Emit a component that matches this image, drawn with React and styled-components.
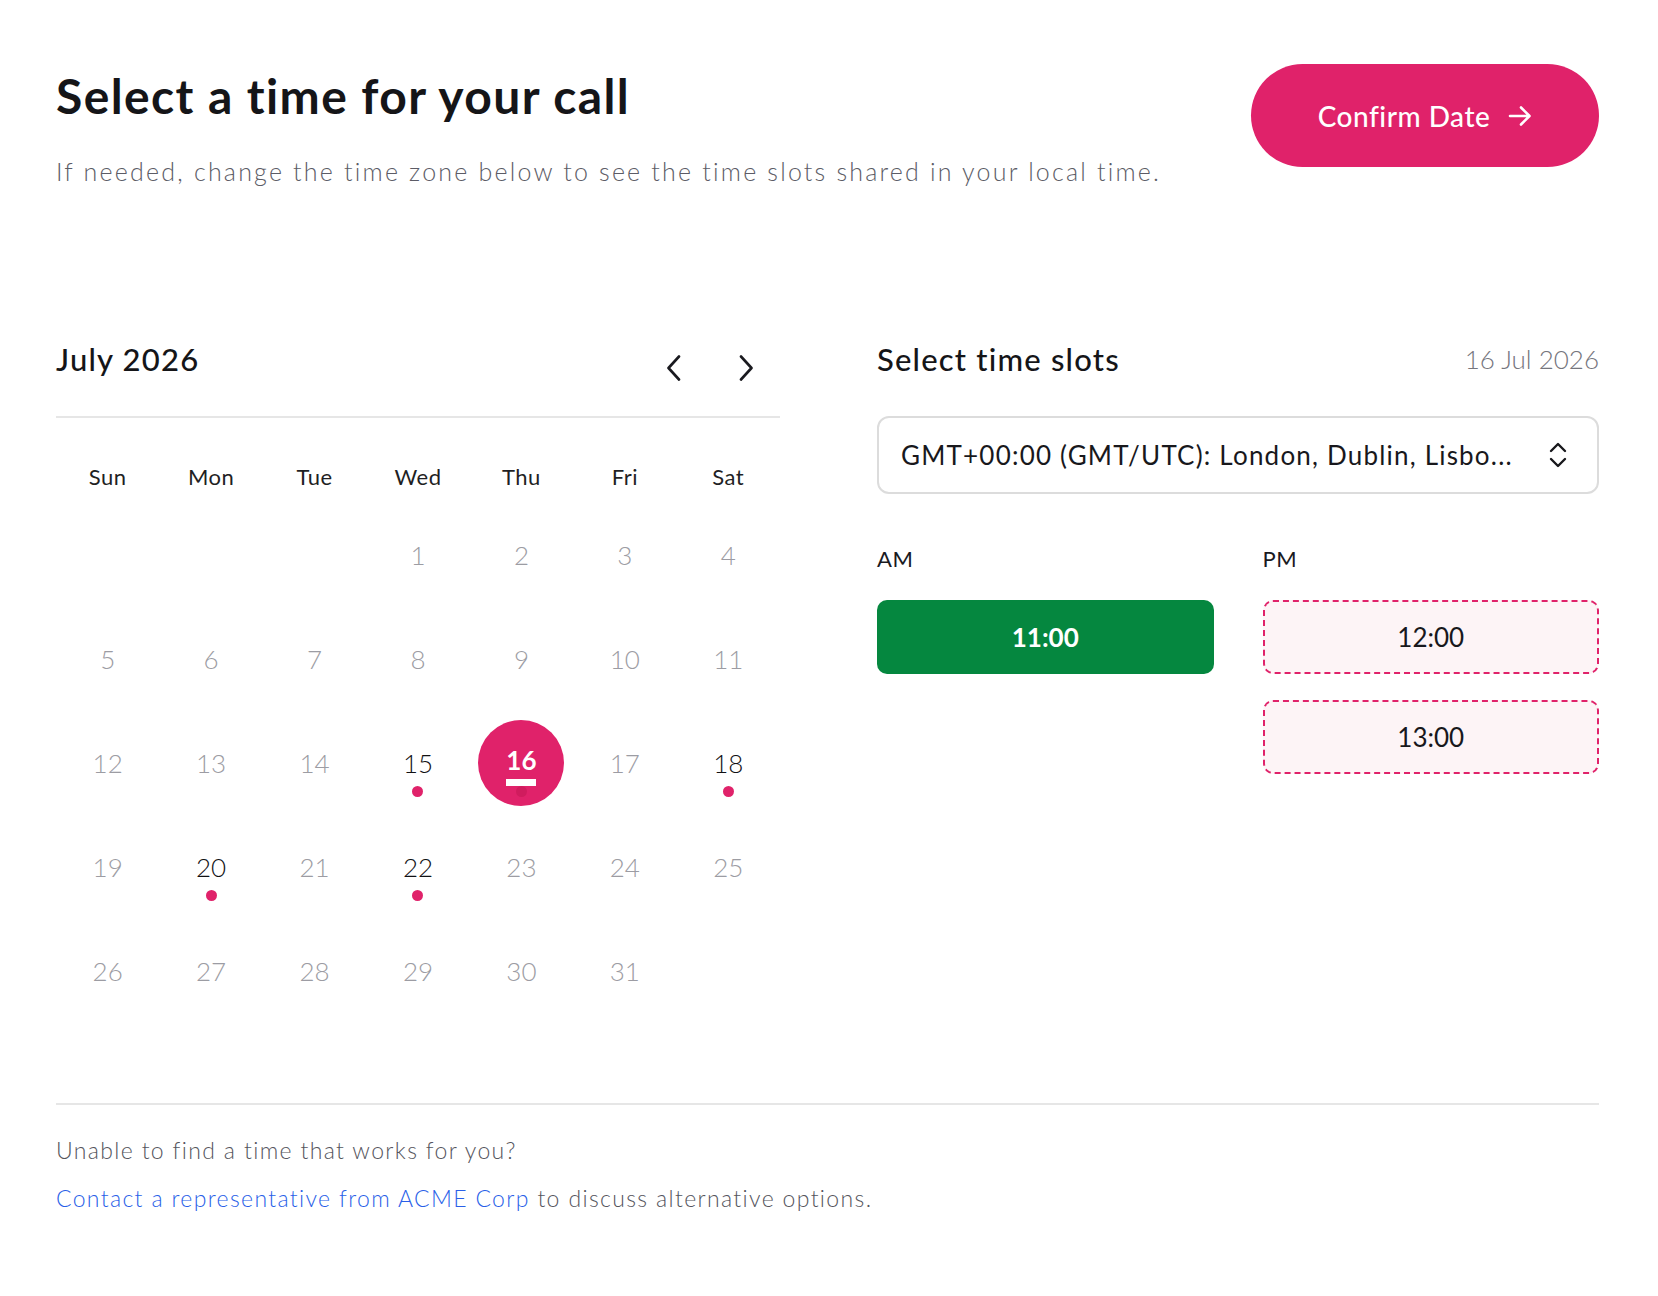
import React from 'react'
import styled, { createGlobalStyle } from 'styled-components'

const GlobalStyle = createGlobalStyle`
  body {
    margin: 0;
    background: #fff;
    font-family: Lato, "Open Sans", sans-serif;
    color: #1a1a1f;
  }
`

const PINK = '#e0226a'

const Page = styled.div`
  padding: 64px 59px 0 56px;
`

const Header = styled.header`
  display: flex;
  justify-content: space-between;
  align-items: flex-start;
`

const Title = styled.h1`
  margin: 3px 0 0;
  font-size: 48px;
  font-weight: 700;
  line-height: 1.2;
  letter-spacing: 1.4px;
  color: #151518;
`

const Subtitle = styled.p`
  margin: 31px 0 0;
  font-size: 25px;
  font-weight: 300;
  line-height: 1.2;
  letter-spacing: 2.2px;
  color: #5c5c66;
`

const ConfirmButton = styled.button`
  display: flex;
  align-items: center;
  justify-content: center;
  gap: 18px;
  width: 348px;
  height: 103px;
  flex-shrink: 0;
  border: none;
  border-radius: 52px;
  background: ${PINK};
  color: #fff;
  font-family: inherit;
  font-size: 28px;
  font-weight: 500;
  letter-spacing: 0.5px;
  cursor: pointer;
`

const Main = styled.main`
  display: grid;
  grid-template-columns: 724px 1fr;
  gap: 97px;
  margin-top: 153px;
`

const PanelHeader = styled.div`
  display: flex;
  justify-content: space-between;
  align-items: center;
  height: 40px;
`

const PanelTitle = styled.h2`
  margin: 0;
  font-size: 31px;
  font-weight: 500;
  letter-spacing: 1.2px;
  color: #151518;
`

const NavButtons = styled.div`
  display: flex;
  gap: 56px;
  margin-right: 26px;
  padding-top: 18px;
`

const NavButton = styled.button`
  display: flex;
  padding: 0;
  border: none;
  background: none;
  color: #1a1a1f;
  cursor: pointer;
`

const Divider = styled.hr`
  margin: 37px 0 0;
  border: none;
  border-top: 2px solid #e6e6e6;
`

const Grid = styled.div`
  display: grid;
  grid-template-columns: repeat(7, 1fr);
  grid-template-rows: 52px;
  grid-auto-rows: 104px;
  margin-top: 33px;
`

const DayName = styled.div`
  display: flex;
  align-items: center;
  justify-content: center;
  font-size: 22px;
  letter-spacing: 0.5px;
  color: #1f1f24;
`

const Cell = styled.div`
  position: relative;
  display: flex;
  align-items: center;
  justify-content: center;
`

const DayNumber = styled.span`
  position: relative;
  display: flex;
  align-items: center;
  justify-content: center;
  width: 86px;
  height: 86px;
  border-radius: 50%;
  font-size: 26px;
  font-weight: ${({ $selected }) => ($selected ? 700 : 300)};
  color: ${({ $selected, $available }) =>
    $selected ? '#fff' : $available ? '#111114' : '#9c9ca3'};
  background: ${({ $selected }) => ($selected ? PINK : 'transparent')};
  padding-bottom: ${({ $selected }) => ($selected ? '6px' : '0')};
  box-sizing: border-box;
`

const Dot = styled.span`
  position: absolute;
  left: 50%;
  top: 50%;
  width: 11px;
  height: 11px;
  margin: 23px 0 0 -5.5px;
  border-radius: 50%;
  background: ${({ $dark }) => ($dark ? '#d01c5e' : PINK)};
`

const SelectedBar = styled.span`
  position: absolute;
  left: 50%;
  top: 50%;
  width: 30px;
  height: 7px;
  margin: 16px 0 0 -15px;
  background: #fff;
`

const DateLabel = styled.span`
  font-size: 26px;
  font-weight: 300;
  color: #75757d;
`

const ZoneSelect = styled.div`
  display: flex;
  align-items: center;
  justify-content: space-between;
  height: 78px;
  margin-top: 37px;
  padding: 0 30px 0 22px;
  border: 2px solid #dcdcdc;
  border-radius: 12px;
  box-sizing: border-box;
  font-size: 26px;
  letter-spacing: 1.2px;
  color: #18181c;
`

const SlotColumns = styled.div`
  display: grid;
  grid-template-columns: 1fr 1fr;
  gap: 49px;
  margin-top: 51px;
`

const SlotColumn = styled.div`
  display: flex;
  flex-direction: column;
  gap: 26px;
`

const Period = styled.div`
  height: 29px;
  font-size: 22px;
  letter-spacing: 0.5px;
  color: #1a1a1f;
`

const Slot = styled.button`
  height: 74px;
  border-radius: 10px;
  font-family: inherit;
  font-size: 26px;
  cursor: pointer;
  ${({ $active }) =>
    $active
      ? `
    border: none;
    background: #05873f;
    color: #fff;
    font-weight: 700;
  `
      : `
    border: 2px dashed ${PINK};
    background: #fdf4f6;
    color: #18181c;
    font-weight: 400;
  `}
`

const Footer = styled.footer`
  margin-top: 80px;
  padding-top: 31px;
  border-top: 2px solid #e6e6e6;
  font-size: 23px;
  font-weight: 300;
  letter-spacing: 1.35px;
  color: #55555d;
`

const FooterLine = styled.p`
  margin: 0 0 20px;
  line-height: 28px;
`

const Link = styled.a`
  color: #2a5fe8;
  text-decoration: none;
`

const Chevron = ({ dir }) => (
  <svg width="16" height="26" viewBox="0 0 16 26" fill="none">
    <polyline
      points={dir === 'left' ? '13,1.5 2.5,13 13,24.5' : '3,1.5 13.5,13 3,24.5'}
      stroke="currentColor"
      strokeWidth="2.6"
      strokeLinecap="round"
      strokeLinejoin="round"
    />
  </svg>
)

const UpDown = () => (
  <svg width="18" height="28" viewBox="0 0 18 28" fill="none">
    <polyline points="2,10 9,3 16,10" stroke="#18181c" strokeWidth="2.4" strokeLinecap="round" strokeLinejoin="round" />
    <polyline points="2,18 9,25 16,18" stroke="#18181c" strokeWidth="2.4" strokeLinecap="round" strokeLinejoin="round" />
  </svg>
)

const Arrow = () => (
  <svg width="24" height="24" viewBox="0 0 24 24" fill="none">
    <path d="M2 12h19M13 3.5l8.5 8.5-8.5 8.5" stroke="#fff" strokeWidth="2.6" strokeLinecap="round" strokeLinejoin="round" />
  </svg>
)

const dayNames = ['Sun', 'Mon', 'Tue', 'Wed', 'Thu', 'Fri', 'Sat']
const available = [15, 18, 20, 22]
const selected = 16

const cells = [
  ...Array.from({ length: 3 }, () => null),
  ...Array.from({ length: 31 }, (_, i) => i + 1),
]

export default function App() {
  return (
    <>
      <GlobalStyle />
      <Page>
        <Header>
          <div>
            <Title>Select a time for your call</Title>
            <Subtitle>
              If needed, change the time zone below to see the time slots shared in your local time.
            </Subtitle>
          </div>
          <ConfirmButton>
            Confirm Date
            <Arrow />
          </ConfirmButton>
        </Header>

        <Main>
          <section>
            <PanelHeader>
              <PanelTitle>July 2026</PanelTitle>
              <NavButtons>
                <NavButton aria-label="Previous month">
                  <Chevron dir="left" />
                </NavButton>
                <NavButton aria-label="Next month">
                  <Chevron dir="right" />
                </NavButton>
              </NavButtons>
            </PanelHeader>
            <Divider />
            <Grid>
              {dayNames.map((d) => (
                <DayName key={d}>{d}</DayName>
              ))}
              {cells.map((day, i) => (
                <Cell key={i}>
                  {day && (
                    <DayNumber
                      $selected={day === selected}
                      $available={available.includes(day)}
                    >
                      {day}
                    </DayNumber>
                  )}
                  {day === selected && <SelectedBar />}
                  {(available.includes(day) || day === selected) && (
                    <Dot $dark={day === selected} />
                  )}
                </Cell>
              ))}
            </Grid>
          </section>

          <section>
            <PanelHeader>
              <PanelTitle>Select time slots</PanelTitle>
              <DateLabel>16 Jul 2026</DateLabel>
            </PanelHeader>
            <ZoneSelect>
              <span>GMT+00:00 (GMT/UTC): London, Dublin, Lisbo...</span>
              <UpDown />
            </ZoneSelect>
            <SlotColumns>
              <SlotColumn>
                <Period>AM</Period>
                <Slot $active>11:00</Slot>
              </SlotColumn>
              <SlotColumn>
                <Period>PM</Period>
                <Slot>12:00</Slot>
                <Slot>13:00</Slot>
              </SlotColumn>
            </SlotColumns>
          </section>
        </Main>

        <Footer>
          <FooterLine>Unable to find a time that works for you?</FooterLine>
          <FooterLine>
            <Link href="#">Contact a representative from ACME Corp</Link> to discuss alternative options.
          </FooterLine>
        </Footer>
      </Page>
    </>
  )
}
